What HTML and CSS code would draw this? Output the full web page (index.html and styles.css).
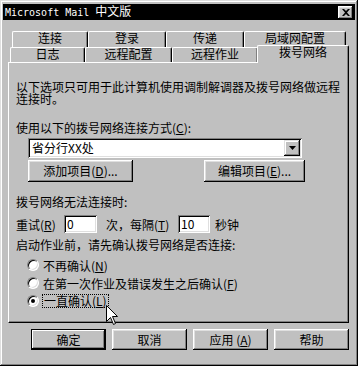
FILE: index.html
```html
<!DOCTYPE html>
<html lang="zh-CN">
<head>
<meta charset="utf-8">
<title>Microsoft Mail 中文版</title>
<link rel="stylesheet" href="styles.css">
</head>
<body>
<div class="window">
  <div class="titlebar">
    <span class="title">Microsoft Mail <span class="cjk">中文版</span></span>
    <span class="close"><svg width="8" height="7" viewBox="0 0 8 7"><path d="M0 0h2l2 2 2-2h2L5 3.5 8 7H6L4 5 2 7H0l3-3.5z" fill="#000"/></svg></span>
  </div>
  <div class="body">
    <div class="tabrow tabrow1">
      <div class="tab w76">连接</div>
      <div class="tab w78">登录</div>
      <div class="tab w78">传递</div>
      <div class="tab w102">局域网配置</div>
    </div>
    <div class="tabrow tabrow2">
      <div class="tab w75">日志</div>
      <div class="tab w87">远程配置</div>
      <div class="tab w86">远程作业</div>
      <div class="tab sel">拨号网络</div>
    </div>
    <div class="panel">
      <p class="para">以下选项只可用于此计算机使用调制解调器及拨号网络做远程连接时。</p>
      <div class="label l1">使用以下的拨号网络连接方式(<u>C</u>):</div>
      <div class="combo field">
        <span class="combo-text">省分行XX处</span>
        <span class="drop"><svg width="7" height="4" viewBox="0 0 7 4"><path d="M0 0h7L3.5 4z" fill="#000"/></svg></span>
      </div>
      <div class="btnrow">
        <div class="btn btn-add">添加项目(<u>D</u>)...</div>
        <div class="btn btn-edit">编辑项目(<u>E</u>)...</div>
      </div>
      <div class="label l2">拨号网络无法连接时:</div>
      <div class="retry">
        <span class="rlabel">重试(<u>R</u>)</span>
        <span class="field num n1">0</span>
        <span class="rlabel2">次，每隔(<u>T</u>)</span>
        <span class="field num n2">10</span>
        <span class="rlabel3">秒钟</span>
      </div>
      <div class="label l3">启动作业前，请先确认拨号网络是否连接:</div>
      <div class="radios">
        <div class="radio-row"><span class="radio"></span><span>不再确认(<u>N</u>)</span></div>
        <div class="radio-row"><span class="radio"></span><span>在第一次作业及错误发生之后确认(<u>F</u>)</span></div>
        <div class="radio-row"><span class="radio on"></span><span class="focus">一直确认(<u>L</u>)</span></div>
      </div>
    </div>
    <div class="actions">
      <div class="btn act default">确定</div>
      <div class="btn act">取消</div>
      <div class="btn act">应用 (<u>A</u>)</div>
      <div class="btn act">帮助</div>
    </div>
  </div>
  <svg class="cursor" width="13" height="20" viewBox="0 0 13 20"><path d="M0.5 0.5V16.5L4.5 12.5L7.5 19.5L9.5 18.5L6.5 11.5H11.5Z" fill="#fff" stroke="#000" stroke-width="1"/></svg>
</div>
</body>
</html>
```
FILE: styles.css
```css
* { box-sizing: border-box; }
html, body { margin: 0; padding: 0; }
body {
  width: 358px;
  height: 366px;
  background: #c0c0c0;
  font-family: "Noto Sans CJK SC", sans-serif;
  font-size: 12px;
  color: #000;
  overflow: hidden;
}
u { text-decoration: underline; text-underline-offset: 1px; }
.window {
  position: relative;
  width: 358px;
  height: 366px;
  background: #c0c0c0;
  padding: 4px 3px 3px 3px;
  box-shadow: inset -1px -1px #000, inset 1px 1px #dfdfdf, inset -2px -2px #808080, inset 2px 2px #fff;
}
.titlebar {
  height: 16px;
  background: #000;
  color: #fff;
  display: flex;
  align-items: center;
  justify-content: space-between;
  padding: 0 2px;
}
.title {
  font-family: "DejaVu Sans Mono", monospace;
  font-size: 10px;
  line-height: 16px;
  white-space: pre;
}
.title .cjk {
  font-family: "Noto Sans CJK SC", sans-serif;
  font-size: 12px;
}
.close {
  width: 15px;
  height: 13px;
  background: #c0c0c0;
  box-shadow: inset -1px -1px #000, inset 1px 1px #fff, inset -2px -2px #808080, inset 2px 2px #dfdfdf;
  display: flex;
  align-items: center;
  justify-content: center;
}
.close svg { display: block; }
.body { padding: 11px 6px 0 5px; }
.tabrow { display: flex; }
.tabrow1 { height: 16px; margin: 0 3px 0 4px; }
.tabrow2 { height: 15px; margin-left: 2px; }
.tab {
  height: 100%;
  background: #c0c0c0;
  border-top: 1px solid #fff;
  border-left: 1px solid #fff;
  border-right: 1px solid #000;
  box-shadow: inset -1px 0 #808080;
  border-radius: 2px 2px 0 0;
  display: flex;
  justify-content: center;
  align-items: flex-start;
  padding-top: 1px;
  line-height: 12px;
  font-family: "Liberation Sans", "Noto Sans CJK SC", sans-serif;
}
.w75 { width: 75px; }
.w76 { width: 76px; }
.w78 { width: 78px; }
.w86 { width: 86px; }
.w87 { width: 87px; }
.w102 { width: 102px; }
.tab.sel {
  position: relative;
  z-index: 1;
  width: 92px;
  height: 18px;
  margin-top: -2px;
  margin-left: -1px;
  padding-top: 1px;
}
.panel {
  height: 261px;
  border-top: 1px solid #fff;
  border-left: 1px solid #fff;
  border-right: 1px solid #000;
  border-bottom: 1px solid #000;
  box-shadow: inset -1px -1px #808080;
  padding: 18px 4px 0 7px;
}
.para { margin: 0; line-height: 12px; }
.label { line-height: 13px; }
.l1 { margin-top: 16px; }
.l2 { margin-top: 13px; }
.l3 { margin-top: 5px; }
.field {
  background: #fff;
  box-shadow: inset 1px 1px #808080, inset -1px -1px #fff, inset 2px 2px #000, inset -2px -2px #dfdfdf;
}
.combo {
  margin: 4px 0 0 12px;
  width: 274px;
  height: 20px;
  display: flex;
  align-items: center;
  padding: 2px;
}
.combo-text { flex: 1; padding-left: 2px; line-height: 16px; }
.drop {
  width: 16px;
  height: 16px;
  background: #c0c0c0;
  box-shadow: inset -1px -1px #000, inset 1px 1px #dfdfdf, inset -2px -2px #808080, inset 2px 2px #fff;
  display: flex;
  align-items: center;
  justify-content: center;
}
.drop svg { display: block; }
.btnrow { margin-top: 2px; display: flex; height: 22px; }
.btn {
  height: 100%;
  background: #c0c0c0;
  box-shadow: inset -1px -1px #000, inset 1px 1px #fff, inset -2px -2px #808080, inset 2px 2px #dfdfdf;
  display: flex;
  align-items: center;
  justify-content: center;
  line-height: 14px;
}
.btn-add { width: 105px; margin-left: 12px; }
.btn-edit { width: 101px; margin-left: 71px; }
.retry { margin-top: 7px; display: flex; align-items: center; height: 18px; }
.rlabel { width: 48px; }
.num { height: 18px; line-height: 18px; padding-left: 3px; }
.n1 { width: 33px; }
.n2 { width: 32px; }
.rlabel2 { width: 72px; margin-left: 9px; }
.rlabel3 { margin-left: 5px; }
.radios { margin-top: 5px; padding-left: 11px; }
.radio-row { height: 18px; display: flex; align-items: center; }
.radio {
  width: 12px;
  height: 12px;
  border-radius: 50%;
  background: #fff;
  border: 1px solid;
  border-color: #808080 #fff #fff #808080;
  box-shadow: inset 1px 1px #000, inset -1px -1px #dfdfdf;
  margin-right: 4px;
  display: flex;
  align-items: center;
  justify-content: center;
}
.radio.on::after {
  content: "";
  width: 4px;
  height: 4px;
  border-radius: 50%;
  background: #000;
}
.focus { outline: 1px dotted #000; outline-offset: 0; line-height: 12px; padding: 0 1px; }
.actions {
  display: flex;
  justify-content: flex-end;
  gap: 6px;
  margin-top: 6px;
  height: 21px;
}
.act { width: 75px; }
.act.default {
  box-shadow: inset 0 0 0 1px #000, inset -2px -2px #000, inset 2px 2px #fff, inset -3px -3px #808080;
}
.cursor { position: absolute; left: 106px; top: 305px; }
```
